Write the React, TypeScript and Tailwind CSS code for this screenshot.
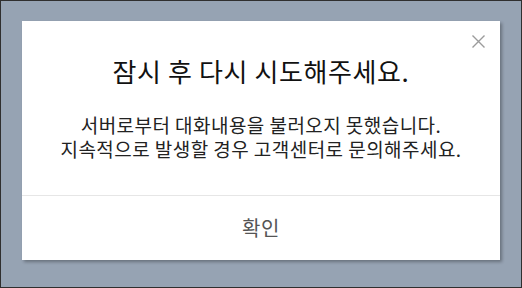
export default function App() {
    return (
        <div className="w-[522px] h-[288px] border border-[#2f2f2f] bg-[#96a3b3] pl-[21px] pt-[20px] font-['Noto_Sans_CJK_KR','Noto_Sans',sans-serif]">
            <div className="relative w-[478px] h-[239px] bg-white shadow-[2px_2px_3px_rgba(0,0,0,0.3)]">
                <button className="absolute right-[14px] top-[13px] w-[15px] h-[15px] flex items-center justify-center">
                    <svg width="15" height="15" viewBox="0 0 15 15" fill="none">
                        <path d="M1.5 1.5 L13.5 13.5 M13.5 1.5 L1.5 13.5" stroke="#9b9b9b" strokeWidth="1.4" />
                    </svg>
                </button>
                <div className="pt-[34px] pb-[34px] text-center">
                    <h1 className="text-[26px] leading-[32px] tracking-[0.6px] text-[#111]">잠시 후 다시 시도해주세요.</h1>
                    <p className="mt-[26px] text-[19px] leading-[24px] tracking-[0.45px] text-[#222]">
                        서버로부터 대화내용을 불러오지 못했습니다.
                        <br />
                        지속적으로 발생할 경우 고객센터로 문의해주세요.
                    </p>
                </div>
                <div className="border-t border-[#e6e6e6] h-[65px] text-center">
                    <button className="w-full h-[64px] text-[20px] leading-[58px] tracking-[0.5px] text-[#555] align-top">확인</button>
                </div>
            </div>
        </div>
    )
}
